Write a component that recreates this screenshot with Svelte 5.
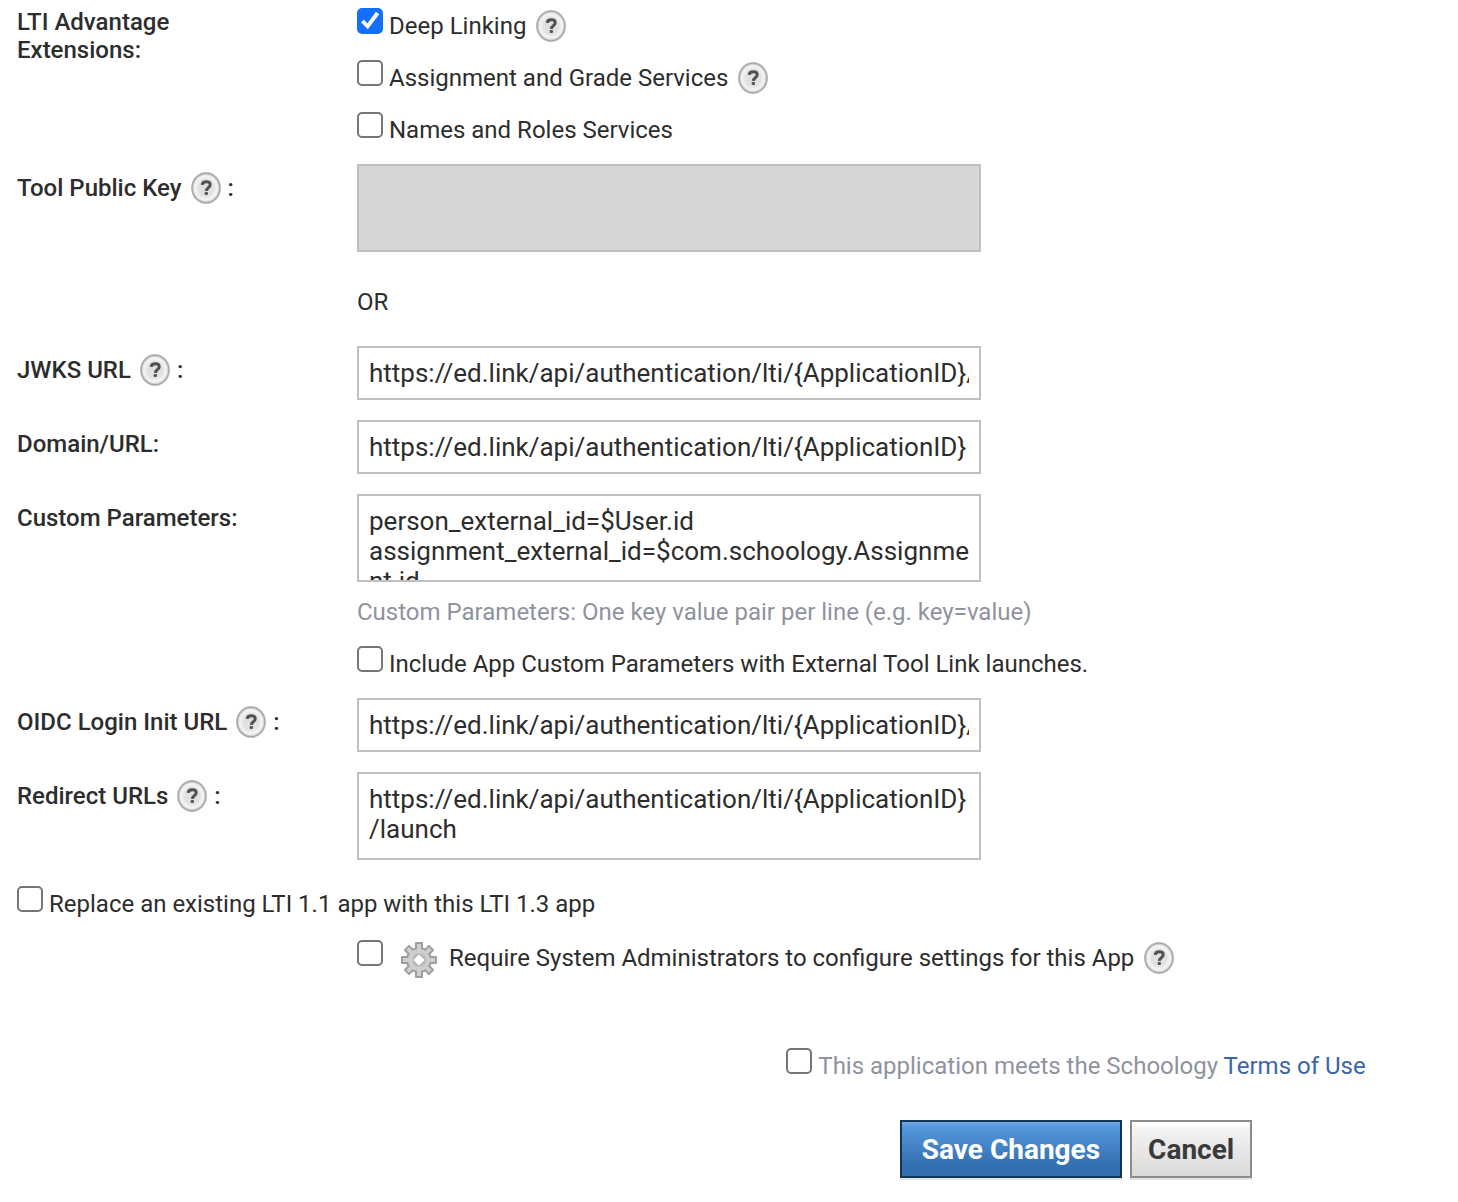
<script lang="ts">
	const teeth = [0, 45, 90, 135, 180, 225, 270, 315];

	let deepLinking = $state(true);
	let gradeServices = $state(false);
	let roleServices = $state(false);
	let includeParams = $state(false);
	let replaceApp = $state(false);
	let requireAdmins = $state(false);
	let acceptTerms = $state(false);

	let publicKey = $state('');
	let jwksUrl = $state('https://ed.link/api/authentication/lti/{ApplicationID}/');
	let domainUrl = $state('https://ed.link/api/authentication/lti/{ApplicationID}');
	let customParams = $state(
		'person_external_id=$User.id\nassignment_external_id=$com.schoology.Assignment.id'
	);
	let loginUrl = $state('https://ed.link/api/authentication/lti/{ApplicationID}/');
	let redirectUrls = $state('https://ed.link/api/authentication/lti/{ApplicationID}\n/launch');
</script>

{#snippet help()}
	<button type="button" class="help" aria-label="Help">
		<svg viewBox="0 0 30 32" width="30" height="32" aria-hidden="true">
			<path
				d="M11.2 12.8C11.4 10.8 13 9.8 15.4 9.8c2.4 0 3.8 1.1 3.8 2.9 0 2.8-3.6 3-3.9 6.2"
				fill="none"
				stroke="#505050"
				stroke-width="3"
			/>
			<rect x="13.6" y="20" width="3.4" height="3" rx="1" fill="#585858" />
		</svg>
	</button>
{/snippet}

<form class="settings" onsubmit={(event) => event.preventDefault()}>
	<fieldset class="row" aria-labelledby="extensions">
		<div class="name top" id="extensions">LTI Advantage Extensions:</div>
		<div class="checks">
			<div class="check">
				<input id="deep-linking" type="checkbox" bind:checked={deepLinking} />
				<label for="deep-linking">Deep Linking</label>
				{@render help()}
			</div>
			<div class="check">
				<input id="grade-services" type="checkbox" bind:checked={gradeServices} />
				<label for="grade-services">Assignment and Grade Services</label>
				{@render help()}
			</div>
			<div class="check">
				<input id="role-services" type="checkbox" bind:checked={roleServices} />
				<label for="role-services">Names and Roles Services</label>
			</div>
		</div>
	</fieldset>

	<div class="row">
		<div class="name"><label for="public-key">Tool Public Key</label>{@render help()}<span>:</span></div>
		<div>
			<textarea id="public-key" class="field" disabled bind:value={publicKey}></textarea>
			<p class="or">OR</p>
		</div>
	</div>

	<div class="row">
		<div class="name"><label for="jwks-url">JWKS URL</label>{@render help()}<span>:</span></div>
		<input id="jwks-url" class="field" type="text" bind:value={jwksUrl} />
	</div>

	<div class="row">
		<div class="name"><label for="domain-url">Domain/URL:</label></div>
		<input id="domain-url" class="field" type="text" bind:value={domainUrl} />
	</div>

	<div class="row">
		<div class="name"><label for="custom-params">Custom Parameters:</label></div>
		<div>
			<textarea id="custom-params" class="field" bind:value={customParams}></textarea>
			<p class="hint">Custom Parameters: One key value pair per line (e.g. key=value)</p>
			<div class="check">
				<input id="include-params" type="checkbox" bind:checked={includeParams} />
				<label for="include-params">Include App Custom Parameters with External Tool Link launches.</label>
			</div>
		</div>
	</div>

	<div class="row">
		<div class="name"><label for="login-url">OIDC Login Init URL</label>{@render help()}<span>:</span></div>
		<input id="login-url" class="field" type="text" bind:value={loginUrl} />
	</div>

	<div class="row">
		<div class="name"><label for="redirect-urls">Redirect URLs</label>{@render help()}<span>:</span></div>
		<textarea id="redirect-urls" class="field" bind:value={redirectUrls}></textarea>
	</div>

	<div class="check replace">
		<input id="replace-app" type="checkbox" bind:checked={replaceApp} />
		<label for="replace-app">Replace an existing LTI 1.1 app with this LTI 1.3 app</label>
	</div>

	<div class="check admins">
		<input id="require-admins" type="checkbox" bind:checked={requireAdmins} />
		<svg class="gear" viewBox="0 0 36 36" width="36" height="36" aria-hidden="true">
			<!-- outline first, then the same shapes slightly smaller as the fill -->
			<g fill="#9c9ea0">
				<circle cx="18" cy="18" r="13" />
				{#each teeth as angle (angle)}
					<rect x="14" y="0" width="8" height="8" rx="1" transform="rotate({angle} 18 18)" />
				{/each}
			</g>
			<g fill="#cdced0">
				<circle cx="18" cy="18" r="11" />
				{#each teeth as angle (angle)}
					<rect x="16" y="2" width="4" height="8" transform="rotate({angle} 18 18)" />
				{/each}
			</g>
			<circle cx="18" cy="18" r="7" fill="#b9babc" />
			<path d="M18 13l5 5-5 5-5-5z" fill="#fff" stroke="#fff" stroke-width="1" stroke-linejoin="round" />
		</svg>
		<label for="require-admins">Require System Administrators to configure settings for this App</label>
		{@render help()}
	</div>

	<div class="footer">
		<div class="check terms">
			<input id="accept-terms" type="checkbox" bind:checked={acceptTerms} />
			<label for="accept-terms">This application meets the Schoology <a href="#terms">Terms of Use</a></label>
		</div>
		<div class="actions">
			<button type="submit" class="button save">Save Changes</button>
			<button type="button" class="button cancel">Cancel</button>
		</div>
	</div>
</form>

<style>
	:global(body) {
		margin: 0;
		background: #fff;
	}

	.settings {
		box-sizing: border-box;
		padding: 8px 0 24px 17px;
		color: #2d2d2d;
		font: 400 24px/28px Roboto, 'Liberation Sans', sans-serif;
	}

	.row {
		display: grid;
		grid-template-columns: 280px minmax(0, 1fr);
		column-gap: 60px;
		align-items: start;
		margin: 0 0 20px;
		padding: 0;
		border: 0;
		min-width: 0;
	}

	.name {
		display: flex;
		margin-top: 10px;
		font-weight: 500;
	}

	.name.top {
		margin-top: 0;
	}

	.name .help {
		margin: -2px 7px -2px 9px;
	}

	.checks {
		display: grid;
		gap: 20px;
	}

	.check {
		display: flex;
		align-items: flex-start;
	}

	.check label {
		margin: 4px 0 0 6px;
	}

	.check .help {
		margin: 2px 0 -2px 10px;
	}

	input[type='checkbox'] {
		appearance: none;
		flex: none;
		box-sizing: border-box;
		width: 26px;
		height: 26px;
		margin: 0;
		border: 2px solid #767676;
		border-radius: 5px;
		background: #fff;
	}

	input[type='checkbox']:checked {
		border-color: #146ffb;
		background: #146ffb;
	}

	input[type='checkbox']:checked::before {
		content: '';
		display: block;
		width: 22px;
		height: 22px;
		background: #fff;
		clip-path: polygon(9% 56%, 22% 44%, 38% 61%, 77% 8%, 92% 19%, 40% 87%);
	}

	.help {
		flex: none;
		width: 30px;
		height: 32px;
		padding: 0;
		border: 0;
		border-radius: 50%;
		background: radial-gradient(
			closest-side,
			#dedede 0%,
			#e2e2e2 50%,
			#f4f4f4 72%,
			#ececec 80%,
			#a6a6a6 92%,
			#c4c4c4 100%
		);
		cursor: help;
	}

	.help svg {
		display: block;
	}

	.field {
		display: block;
		box-sizing: border-box;
		width: 100%;
		max-width: 624px;
		margin: 0;
		padding: 10px;
		border: 2px solid #bfbfbf;
		border-radius: 0;
		background: #fff;
		color: #2d2d2d;
		font: 400 26px/30px Roboto, 'Liberation Sans', sans-serif;
	}

	textarea.field {
		height: 88px;
		resize: none;
		overflow: hidden;
	}

	.field:disabled {
		background: #d6d6d6;
	}

	.or {
		margin: 36px 0 30px;
	}

	.row:has(.or) {
		margin-bottom: 0;
	}

	.hint {
		margin: 16px 0 20px;
		color: #8f939f;
	}

	.replace {
		margin-top: 26px;
	}

	.admins {
		margin: 22px 0 0 340px;
	}

	.gear {
		flex: none;
		margin: 2px 6px -6px 18px;
	}

	.footer {
		display: flex;
		flex-direction: column;
		align-items: center;
		gap: 40px;
		margin: 76px 0 0 677px;
	}

	.terms {
		color: #8f939f;
	}

	.terms a {
		color: #3a66a7;
		text-decoration: none;
	}

	.actions {
		display: flex;
		gap: 8px;
	}

	.button {
		padding: 13px 16px 11px;
		border: 2px solid #8c8c8c;
		box-shadow: 0 2px 0 #e4e4e4;
		font: 700 28px/30px Roboto, 'Liberation Sans', sans-serif;
	}

	.save {
		padding-inline: 20px;
		border-color: #0f3654;
		background: linear-gradient(#6fa9e3, #5496db 10%, #3370b1 80%, #3370b1) padding-box;
		color: #fff;
	}

	.cancel {
		background: linear-gradient(#fff 5%, #f3f3f3 12%, #dadada) padding-box;
		color: #3a3a3a;
	}
</style>
